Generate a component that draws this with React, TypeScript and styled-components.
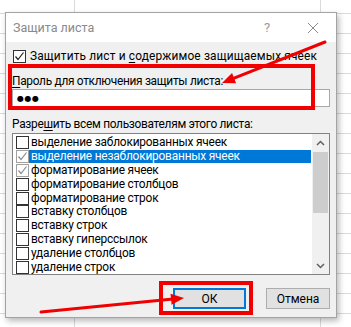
import React from "react";
import styled, { createGlobalStyle } from "styled-components";

const GlobalStyle = createGlobalStyle`
  html, body { margin: 0; padding: 0; }
  body {
    background: #fff;
    font-family: Roboto, "Noto Sans", sans-serif;
    font-size: 11.9px;
    color: #000;
  }
`;

const Page = styled.div`
  position: relative;
  width: 351px;
  height: 327px;
  box-sizing: border-box;
  padding: 12px 0 0 5px;
  overflow: hidden;
  background-color: #fff;
  background-image:
    linear-gradient(to right, transparent 74px, #dadada 74px 75px, transparent 75px 320px, #dadada 320px 321px, transparent 321px),
    linear-gradient(to bottom, #dadada 0 1px, transparent 1px 20px);
  background-size: 100% 100%, 100% 20px;
  background-position: 0 0, 0 13px;
  background-repeat: no-repeat, repeat;
`;

const Dialog = styled.div`
  width: 332px;
  height: 306px;
  box-sizing: border-box;
  border: 1px solid #a3a3a3;
  background: #f0f0f0;
  box-shadow: 2px 3px 6px rgba(0, 0, 0, 0.28);
  display: flex;
  flex-direction: column;
`;

const TitleBar = styled.div`
  height: 29px;
  flex: none;
  background: #fff;
  display: flex;
  align-items: center;
  padding: 0 0 0 7px;
`;

const Title = styled.div`
  flex: 1;
  color: #8a8a8a;
  font-size: 12.5px;
`;

const Help = styled.div`
  color: #9a9a9a;
  font-size: 13px;
  width: 46px;
  text-align: center;
  margin-right: 0;
`;

const CloseBox = styled.div`
  width: 46px;
  display: flex;
  justify-content: center;
  align-items: center;
`;

const Body = styled.div`
  flex: 1;
  display: flex;
  flex-direction: column;
  padding: 7px 6px 0 6px;
`;

const CheckRow = styled.div`
  display: flex;
  align-items: center;
  height: 14px;
  line-height: 14px;
  padding-left: 1px;
  gap: 4px;
  white-space: nowrap;
  letter-spacing: 0.15px;
`;

const Label = styled.div<{ $mt: number }>`
  margin-top: ${(p) => p.$mt}px;
  height: 14px;
  line-height: 14px;
  white-space: nowrap;
  letter-spacing: -0.3px;
`;

const U = styled.span`
  text-decoration: underline;
  text-underline-offset: 2px;
`;

const Input = styled.div`
  margin-top: 1px;
  height: 18px;
  box-sizing: border-box;
  border: 1px solid #a8a8a8;
  background: #fff;
  display: flex;
  align-items: center;
  padding-left: 4px;
`;

const Dots = styled.span`
  font-family: "DejaVu Sans", sans-serif;
  font-size: 8px;
  letter-spacing: 0.5px;
  color: #000;
`;

const List = styled.div`
  margin-top: 2px;
  height: 142px;
  box-sizing: border-box;
  border: 1px solid #828282;
  background: #fff;
  display: flex;
`;

const Items = styled.div`
  flex: 1;
  padding-top: 2px;
  display: flex;
  flex-direction: column;
`;

const Item = styled.div`
  display: flex;
  align-items: center;
  height: 14px;
  padding-left: 3px;
  margin-right: 1px;
`;

const ItemText = styled.div<{ $sel?: boolean }>`
  flex: 1;
  height: 13px;
  line-height: 13px;
  padding-left: 2px;
  white-space: nowrap;
  letter-spacing: -0.2px;
  background: ${(p) => (p.$sel ? "#0078d7" : "transparent")};
  color: ${(p) => (p.$sel ? "#fff" : "#000")};
`;

const Box = styled.div<{ $gray?: boolean }>`
  width: 13px;
  height: 13px;
  flex: none;
  box-sizing: border-box;
  border: 1px solid ${(p) => (p.$gray ? "#a0a0a0" : "#333")};
  background: #fff;
  display: flex;
  align-items: center;
  justify-content: center;
`;

const Scrollbar = styled.div`
  width: 17px;
  flex: none;
  background: #f0f0f0;
  display: flex;
  flex-direction: column;
`;

const ScrollBtn = styled.div`
  height: 17px;
  flex: none;
  display: flex;
  align-items: center;
  justify-content: center;
`;

const Thumb = styled.div`
  margin: 1px 1px 0 1px;
  height: 61px;
  background: #cdcdcd;
`;

const Track = styled.div`
  flex: 1;
`;

const Footer = styled.div`
  margin-top: 13px;
  display: flex;
  justify-content: flex-end;
  gap: 20px;
  padding-right: 0;
`;

const Button = styled.div<{ $w: number; $def?: boolean }>`
  width: ${(p) => p.$w}px;
  height: 21px;
  box-sizing: border-box;
  border: ${(p) => (p.$def ? "2px solid #0078d7" : "1px solid #adadad")};
  background: #e1e1e1;
  display: flex;
  align-items: center;
  justify-content: center;
  font-size: 12px;
`;

const Overlay = styled.svg`
  position: absolute;
  left: 0;
  top: 0;
  pointer-events: none;
`;

const Frame = styled.div<{ $x: number; $y: number; $w: number; $h: number }>`
  position: absolute;
  left: ${(p) => p.$x}px;
  top: ${(p) => p.$y}px;
  width: ${(p) => p.$w}px;
  height: ${(p) => p.$h}px;
  box-sizing: border-box;
  border: 4px solid #f00000;
  pointer-events: none;
`;

const Check = ({ color }: { color: string }) => (
  <svg width="11" height="11" viewBox="0 0 11 11">
    <polyline points="1.5,5.5 4,8.5 9.5,1.5" fill="none" stroke={color} strokeWidth="1.2" />
  </svg>
);

const Chevron = ({ up }: { up?: boolean }) => (
  <svg width="9" height="6" viewBox="0 0 9 6">
    <polyline
      points={up ? "1,5 4.5,1.5 8,5" : "1,1 4.5,4.5 8,1"}
      fill="none"
      stroke="#606060"
      strokeWidth="1.5"
    />
  </svg>
);

function Arrow({ x1, y1, x2, y2 }: { x1: number; y1: number; x2: number; y2: number }) {
  const dx = x2 - x1;
  const dy = y2 - y1;
  const len = Math.hypot(dx, dy);
  const ux = dx / len;
  const uy = dy / len;
  const hl = 13;
  const hw = 5.5;
  const bx = x2 - ux * hl;
  const by = y2 - uy * hl;
  const pts = `${x2},${y2} ${bx - uy * hw},${by + ux * hw} ${bx + uy * hw},${by - ux * hw}`;
  return (
    <g>
      <line x1={x1} y1={y1} x2={bx + ux * 2} y2={by + uy * 2} stroke="#f00000" strokeWidth="3" strokeLinecap="round" />
      <polygon points={pts} fill="#f00000" />
    </g>
  );
}

const items: { text: string; checked?: boolean; sel?: boolean }[] = [
  { text: "выделение заблокированных ячеек" },
  { text: "выделение незаблокированных ячеек", checked: true, sel: true },
  { text: "форматирование ячеек", checked: true },
  { text: "форматирование столбцов" },
  { text: "форматирование строк" },
  { text: "вставку столбцов" },
  { text: "вставку строк" },
  { text: "вставку гиперссылок" },
  { text: "удаление столбцов" },
  { text: "удаление строк" },
];

export default function App() {
  return (
    <>
      <GlobalStyle />
      <Page>
        <Dialog>
          <TitleBar>
            <Title>Защита листа</Title>
            <Help>?</Help>
            <CloseBox>
              <svg width="12" height="12" viewBox="0 0 12 12">
                <line x1="1" y1="1" x2="11" y2="11" stroke="#8a8a8a" strokeWidth="1" />
                <line x1="11" y1="1" x2="1" y2="11" stroke="#8a8a8a" strokeWidth="1" />
              </svg>
            </CloseBox>
          </TitleBar>
          <Body>
            <CheckRow>
              <Box>
                <Check color="#222" />
              </Box>
              <span>
                Защитить лист и <U>с</U>одержимое защищаемых ячеек
              </span>
            </CheckRow>
            <Label $mt={11}>
              <U>П</U>ароль для отключения защиты листа:
            </Label>
            <Input>
              <Dots>●●●</Dots>
            </Input>
            <Label $mt={10}>
              Разре<U>ш</U>ить всем пользователям этого листа:
            </Label>
            <List>
              <Items>
                {items.map((it) => (
                  <Item key={it.text}>
                    <Box $gray={it.checked}>{it.checked && <Check color="#8a8a8a" />}</Box>
                    <ItemText $sel={it.sel}>{it.text}</ItemText>
                  </Item>
                ))}
              </Items>
              <Scrollbar>
                <ScrollBtn>
                  <Chevron up />
                </ScrollBtn>
                <Thumb />
                <Track />
                <ScrollBtn>
                  <Chevron />
                </ScrollBtn>
              </Scrollbar>
            </List>
            <Footer>
              <Button $w={73} $def>
                ОК
              </Button>
              <Button $w={64}>Отмена</Button>
            </Footer>
          </Body>
        </Dialog>
        <Frame $x={8} $y={64} $w={307} $h={46} />
        <Frame $x={159} $y={281} $w={94} $h={34} />
        <Overlay width="351" height="327" viewBox="0 0 351 327">
          <Arrow x1={325} y1={42} x2={222} y2={83} />
          <Arrow x1={41} y1={312} x2={184} y2={298} />
        </Overlay>
      </Page>
    </>
  );
}
